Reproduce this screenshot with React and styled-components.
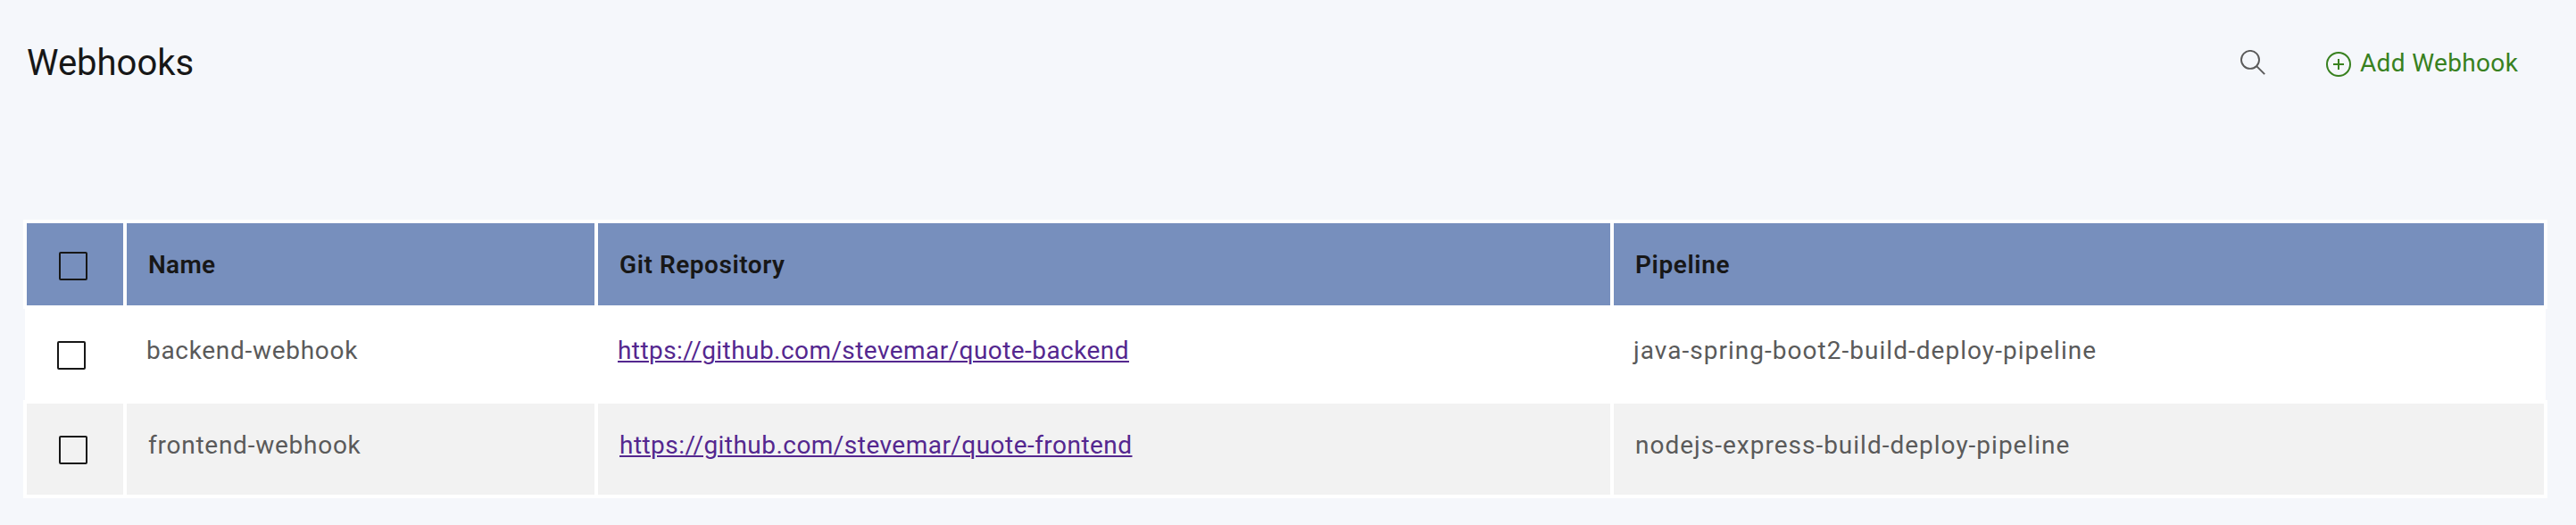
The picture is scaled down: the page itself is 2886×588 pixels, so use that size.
import React from "react";
import styled, { createGlobalStyle } from "styled-components";

const GlobalStyle = createGlobalStyle`
  * { box-sizing: border-box; }
  body {
    margin: 0;
    background: #f5f7fb;
    font-family: Roboto, "Open Sans", sans-serif;
    color: #171717;
  }
`;

const Page = styled.main`
  min-height: 588px;
  padding: 0 32px 30px 26px;
  display: flex;
  flex-direction: column;
  background: #f5f7fb;
`;

const Header = styled.header`
  display: flex;
  align-items: flex-start;
  justify-content: space-between;
  height: 246px;
  padding: 47px 32px 0 4px;
`;

const Title = styled.h1`
  margin: 0;
  font-size: 40px;
  font-weight: 400;
  line-height: 48px;
`;

const Actions = styled.div`
  display: flex;
  align-items: flex-start;
  gap: 68px;
  padding-top: 6px;
`;

const IconButton = styled.button`
  display: flex;
  margin: 3px 0 0;
  padding: 0;
  border: 0;
  background: none;
  color: #5a5a5a;
`;

const AddButton = styled.button`
  display: flex;
  align-items: flex-start;
  gap: 10px;
  width: 216px;
  padding: 0;
  border: 0;
  background: none;
  color: #38811f;
  font: 400 28px/36px Roboto, "Open Sans", sans-serif;
  letter-spacing: 0.35px;
  white-space: nowrap;

  svg { flex: none; margin-top: 5px; }
`;

const Table = styled.div`
  display: flex;
  flex-direction: column;
  width: 2828px;
`;

const Row = styled.div`
  display: grid;
  grid-template-columns: 108px 524px 1134px 1042px;
  column-gap: 4px;
  background: #fff;
  border: 4px solid #fff;
`;

const HeadRow = styled(Row)`
  height: 100px;
`;

const PlainRow = styled(Row)`
  height: 102px;
  margin: 0 2px;
  border-width: 0 2px;
`;

const StripedRow = styled(Row)`
  height: 110px;
`;

const HeadCell = styled.div`
  padding: 29px 24px 0;
  background: #778fbd;
  font-size: 28px;
  font-weight: 600;
  line-height: 36px;
  letter-spacing: ${(p) => p.$tracking || 0}px;
`;

const Cell = styled.div`
  padding: 29px 22px 0;
  color: #5a5a5a;
  font-size: 28px;
  line-height: 36px;
  letter-spacing: ${(p) => p.$tracking || 0}px;

  ${StripedRow} & {
    padding: 29px 24px 0;
    background: #f2f2f2;
  }
`;

const SelectCell = styled(Cell)`
  padding: 36px 0 0 34px;

  ${StripedRow} & { padding: 36px 0 0 36px; }
`;

const SelectHeadCell = styled(HeadCell)`
  padding: 32px 0 0 36px;
`;

const Checkbox = styled.input.attrs({ type: "checkbox" })`
  display: block;
  appearance: none;
  width: 32px;
  height: 32px;
  margin: 0;
  border: 2px solid #171717;
  border-radius: 2px;
`;

const RepoLink = styled.a`
  color: #54278f;
  text-decoration: underline;
  text-decoration-thickness: 2px;
  text-underline-offset: 2px;
`;

const SearchIcon = () => (
  <svg width="28" height="28" viewBox="0 0 28 28" fill="none" stroke="currentColor" strokeWidth="1.9">
    <circle cx="11" cy="10.9" r="10" />
    <path d="M18.2 18.1L27.2 27.1" />
  </svg>
);

const AddIcon = () => (
  <svg width="28" height="28" viewBox="0 0 28 28" fill="none" stroke="currentColor" strokeWidth="2">
    <circle cx="14" cy="14" r="13" />
    <path d="M14 8V20M8 14H20" />
  </svg>
);

export default function App() {
  return (
    <>
      <GlobalStyle />
      <Page>
        <Header>
          <Title>Webhooks</Title>
          <Actions>
            <IconButton aria-label="Search"><SearchIcon /></IconButton>
            <AddButton><AddIcon />Add Webhook</AddButton>
          </Actions>
        </Header>
        <Table>
          <HeadRow>
            <SelectHeadCell><Checkbox /></SelectHeadCell>
            <HeadCell $tracking={0.27}>Name</HeadCell>
            <HeadCell $tracking={0.54}>Git Repository</HeadCell>
            <HeadCell $tracking={0.6}>Pipeline</HeadCell>
          </HeadRow>
          <PlainRow>
            <SelectCell><Checkbox /></SelectCell>
            <Cell $tracking={0.7}>backend-webhook</Cell>
            <Cell $tracking={0.434}>
              <RepoLink href="https://github.com/stevemar/quote-backend">https://github.com/stevemar/quote-backend</RepoLink>
            </Cell>
            <Cell $tracking={1.03}>java-spring-boot2-build-deploy-pipeline</Cell>
          </PlainRow>
          <StripedRow>
            <SelectCell><Checkbox /></SelectCell>
            <Cell $tracking={0.75}>frontend-webhook</Cell>
            <Cell $tracking={0.46}>
              <RepoLink href="https://github.com/stevemar/quote-frontend">https://github.com/stevemar/quote-frontend</RepoLink>
            </Cell>
            <Cell $tracking={1}>nodejs-express-build-deploy-pipeline</Cell>
          </StripedRow>
        </Table>
      </Page>
    </>
  );
}
